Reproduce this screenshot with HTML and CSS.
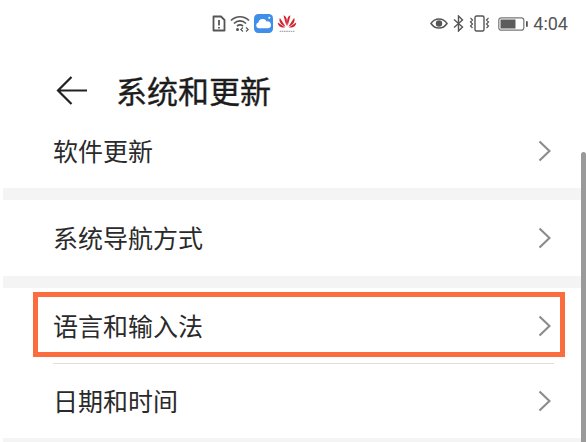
FILE: index.html
```html
<!DOCTYPE html>
<html lang="zh-CN">
<head>
<meta charset="utf-8">
<title>系统和更新</title>
<link rel="stylesheet" href="styles.css">
</head>
<body>
<div class="screen">
  <div class="status">
    <div class="status-center">
      <svg class="ic" width="14" height="17" viewBox="0 0 14 17"><path d="M1.500 1.500H9L12.500 5V15.500H1.500Z" fill="none" stroke="#555" stroke-width="1.800" stroke-linejoin="round"/><path d="M7 5V10.500M7 12V13.500" stroke="#555" stroke-width="1.800"/></svg>
      <svg class="ic" width="20" height="17" viewBox="0 0 20 17"><path d="M1 5.500C6 .5 14 .5 19 5.500M4 8.500C7.500 5 12.500 5 16 8.500M7 11C8.800 9.600 11.200 9.600 13 11" fill="none" stroke="#555" stroke-width="1.700"/><circle cx="7.500" cy="14.500" r="1.500" fill="#555"/><path d="M13 12.500L10.800 14.500L13 16.500M16 12.500L18.200 14.500L16 16.500" fill="none" stroke="#555" stroke-width="1.100"/></svg>
      <svg class="ic" width="19" height="19" viewBox="0 0 18 18"><rect width="18" height="18" rx="4" fill="#3f8fe8"/><path d="M4.500 13.500a2.800 2.800 0 0 1-.3-5.500A4.200 4.200 0 0 1 12 7a3.300 3.300 0 0 1 1.500 6.500Z" fill="#fff"/><circle cx="14.500" cy="3.500" r="1" fill="#fff"/></svg>
      <svg class="ic huawei" width="20" height="20" viewBox="0 0 19 19"><g fill="#d3222e"><path d="M8.900 11.500L6.200 1.500C9 1.500 10.200 6.500 8.900 11.500Z"/><path d="M10.100 11.500L12.800 1.500C10 1.500 8.800 6.500 10.100 11.500Z"/><path d="M8.200 12L2.800 3.800C1.200 6.500 3.500 10.500 8.200 12Z"/><path d="M10.800 12L16.200 3.800C17.800 6.500 15.500 10.500 10.800 12Z"/><path d="M7.800 12.800L.8 8C.5 11 4 13.500 7.800 12.800Z"/><path d="M11.200 12.800L18.200 8C18.500 11 15 13.500 11.200 12.800Z"/></g><path d="M2.500 16.500H16.500" stroke="#aaa" stroke-width="1.200" stroke-dasharray="1.500 .6"/></svg>
    </div>
    <div class="status-right">
      <svg class="ic" width="18" height="13" viewBox="0 0 18 13"><path d="M1 6.500C5 .5 13 .5 17 6.500C13 12.500 5 12.500 1 6.500Z" fill="none" stroke="#555" stroke-width="1.500"/><circle cx="9" cy="6.500" r="3.200" fill="#555"/></svg>
      <svg class="ic" width="11" height="17" viewBox="0 0 11 17"><path d="M1 4.500L9.500 12L5.500 16V1L9.500 5L1 12.500" fill="none" stroke="#555" stroke-width="1.400"/></svg>
      <svg class="ic" width="21" height="17" viewBox="0 0 21 17"><rect x="6" y="1" width="9" height="15" rx="1.500" fill="none" stroke="#555" stroke-width="1.400"/><path d="M1.500 3L3.500 5L1.500 7L3.500 9L1.500 11L3.500 13M19.500 3L17.500 5L19.500 7L17.500 9L19.500 11L17.500 13" fill="none" stroke="#555" stroke-width="1.200"/></svg>
      <svg class="ic batt" width="30" height="14" viewBox="0 0 30 14"><rect x=".8" y=".8" width="25" height="12.400" rx="2.500" fill="none" stroke="#777" stroke-width="1.200"/><rect x="2.500" y="2.500" width="15" height="9" fill="#5c5c5c"/><rect x="28" y="4" width="1.800" height="6" rx=".9" fill="#555"/></svg>
      <span class="time">4:04</span>
    </div>
  </div>
  <header class="head">
    <svg class="back" width="32" height="30" viewBox="0 0 32 30"><path d="M31 15.500H2M15.500 2L2 15.500L15.500 29" fill="none" stroke="#222" stroke-width="2.200"/></svg>
    <h1 class="title">系统和更新</h1>
  </header>
  <div class="group first">
    <div class="row"><span class="label">软件更新</span><svg class="chev" width="13" height="22" viewBox="0 0 13 22"><path d="M1.500 1.500L11.500 11L1.500 20.500" fill="none" stroke="#8c8c8c" stroke-width="2.200"/></svg></div>
  </div>
  <div class="band"></div>
  <div class="group">
    <div class="row"><span class="label">系统导航方式</span><svg class="chev" width="13" height="22" viewBox="0 0 13 22"><path d="M1.500 1.500L11.500 11L1.500 20.500" fill="none" stroke="#8c8c8c" stroke-width="2.200"/></svg></div>
  </div>
  <div class="band"></div>
  <div class="group">
    <div class="row row-lang"><span class="label">语言和输入法</span><svg class="chev" width="13" height="22" viewBox="0 0 13 22"><path d="M1.500 1.500L11.500 11L1.500 20.500" fill="none" stroke="#8c8c8c" stroke-width="2.200"/></svg><div class="highlight"></div></div>
    <div class="divider"></div>
    <div class="row row-date"><span class="label">日期和时间</span><svg class="chev" width="13" height="22" viewBox="0 0 13 22"><path d="M1.500 1.500L11.500 11L1.500 20.500" fill="none" stroke="#8c8c8c" stroke-width="2.200"/></svg></div>
  </div>
  <div class="band"></div>
  <div class="scrollbar"></div>
</div>
</body>
</html>
```
FILE: styles.css
```css
* { box-sizing: border-box; }
html, body { margin: 0; padding: 0; background: #fff; }
.screen {
  position: relative;
  width: 586px;
  height: 442px;
  overflow: hidden;
  background: #fff;
  font-family: "Noto Sans CJK SC", "Noto Sans", sans-serif;
  color: #222;
}
.status {
  height: 48px;
  padding: 14px 18px 0 212px;
  display: flex;
  justify-content: space-between;
  align-items: flex-start;
}
.status-center, .status-right { display: flex; align-items: center; gap: 4px; height: 19px; }
.status-right { gap: 5px; }
.ic { display: block; flex: none; }
.batt { margin-left: 3px; }
.time {
  font-family: "Roboto", "Liberation Sans", sans-serif;
  font-size: 18px;
  color: #555;
  line-height: 19px;
}
.head {
  height: 86px;
  padding: 0 0 0 56px;
  display: flex;
  align-items: flex-start;
  gap: 28px;
}
.back { display: block; margin-top: 27px; }
.title {
  margin: 20px 0 0;
  font-size: 31px;
  font-weight: 400;
  -webkit-text-stroke: 0.35px #1c1c1c;
  line-height: 44px;
  color: #1c1c1c;
}
.group { margin: 0; }
.first { margin-top: -10px; }
.row {
  position: relative;
  height: 76px;
  padding: 0 35px 0 53px;
  display: flex;
  align-items: center;
  justify-content: space-between;
}
.first .row { height: 64px; padding-bottom: 11px; }
.label { font-size: 25px; line-height: 36px; color: #2a2a2a; margin-top: -2px; }
.first .label { margin-top: -1px; }
.chev { display: block; flex: none; }
.band { height: 12px; margin-left: 3px; background: #f4f4f4; }
.row-lang { height: 75px; }
.row-date { height: 74px; }
.divider { height: 1px; margin: 0 32px 0 53px; background: #dedede; }
.highlight {
  position: absolute;
  left: 33px;
  top: 4px;
  width: 532px;
  height: 65px;
  border: 5px solid #fb6d3f;
}
.scrollbar {
  position: absolute;
  right: 0;
  top: 152px;
  bottom: 0;
  width: 5px;
  border-radius: 3px 3px 0 0;
  background: #9a9a9a;
}
```
